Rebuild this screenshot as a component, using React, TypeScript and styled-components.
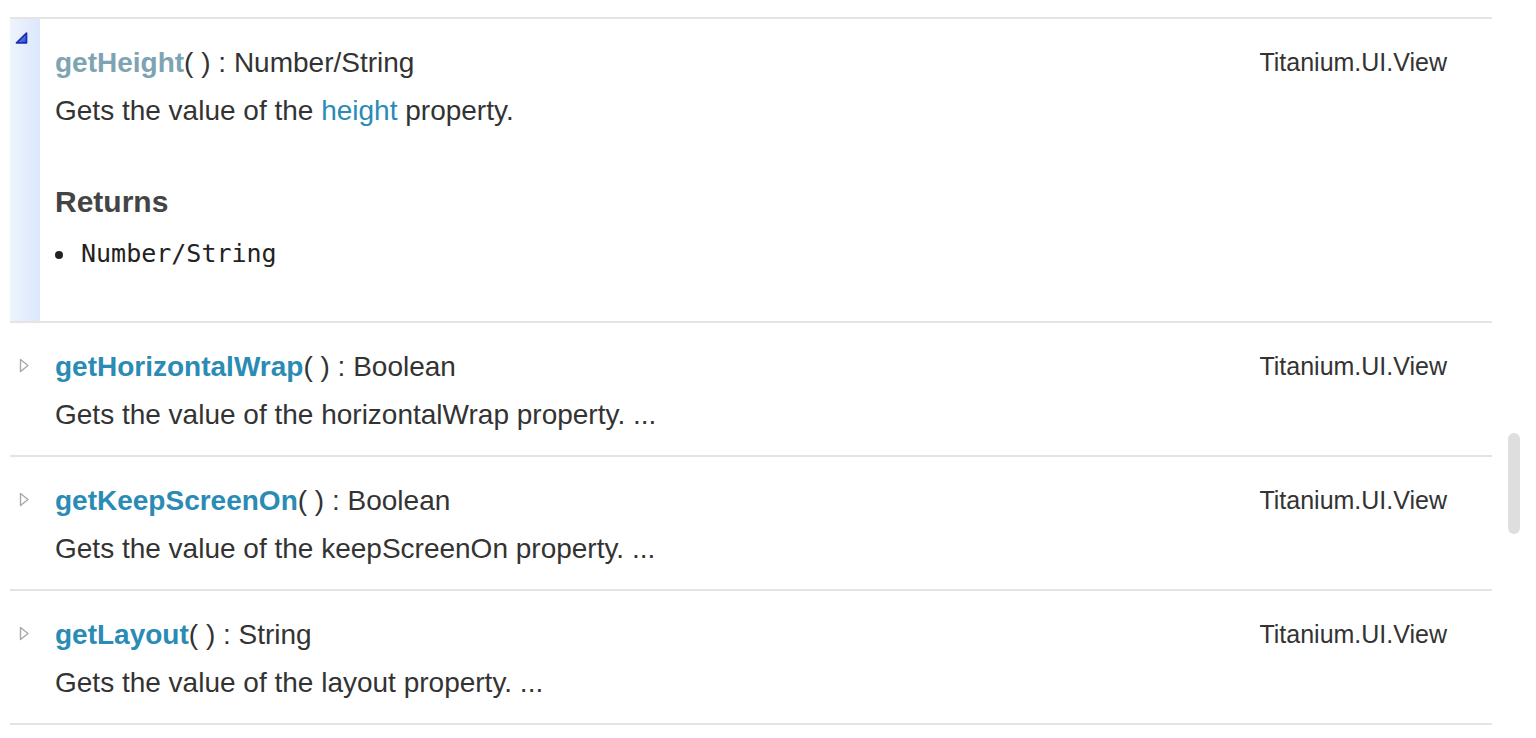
import React from "react";
import styled, { createGlobalStyle } from "styled-components";

const Global = createGlobalStyle`
  html, body { margin: 0; padding: 0; background: #fff; }
  body { font-family: "Liberation Sans", Arial, sans-serif; color: #333; overflow: hidden; }
`;

const Page = styled.div`
  padding: 17px 0 0 10px;
  width: 1482px;
`;

const List = styled.div`
  border-top: 2px solid #e4e4e4;
`;

const Row = styled.div`
  display: grid;
  grid-template-columns: 30px 1fr auto;
  border-bottom: 2px solid #e4e4e4;
`;

const Toggle = styled.div<{ $open?: boolean }>`
  display: flex;
  justify-content: flex-start;
  align-items: flex-start;
  padding-top: ${(p) => (p.$open ? "13px" : "35px")};
  padding-left: ${(p) => (p.$open ? "5px" : "9px")};
  background: ${(p) => (p.$open ? "linear-gradient(to right, #eef4fd, #dbe7fb)" : "transparent")};
`;

const Body = styled.div<{ $open?: boolean }>`
  padding: 20px 0 ${(p) => (p.$open ? "47px" : "16px")} 15px;
`;

const Line = styled.div`
  font-size: 28px;
  line-height: 48px;
  white-space: nowrap;
`;

const Name = styled.span<{ $visited?: boolean }>`
  font-weight: bold;
  color: ${(p) => (p.$visited ? "#7ea3b2" : "#2a8bb5")};
`;

const Link = styled.span`
  color: #2a8bb5;
`;

const Owner = styled.div`
  padding: 23px 45px 0 0;
  font-size: 25px;
  line-height: 40px;
  color: #333;
`;

const Heading = styled.div`
  margin-top: 47px;
  font-size: 30px;
  line-height: 40px;
  font-weight: bold;
  color: #444;
`;

const Item = styled.div`
  margin-top: 12px;
  display: flex;
  align-items: center;
  font-family: "DejaVu Sans Mono", monospace;
  font-size: 25px;
  line-height: 40px;
  color: #222;
  &::before {
    content: "";
    width: 8px;
    height: 8px;
    border-radius: 50%;
    background: #222;
    margin: 2px 18px 0 0;
  }
`;

const Thumb = styled.div`
  position: fixed;
  left: 1508px;
  top: 433px;
  width: 12px;
  height: 101px;
  border-radius: 6px;
  background: #dedede;
`;

const OpenIcon = () => (
  <svg width="13" height="12" viewBox="0 0 13 12">
    <defs>
      <linearGradient id="tri" x1="0" y1="0" x2="1" y2="1">
        <stop offset="0" stopColor="#8aa6f2" />
        <stop offset="1" stopColor="#2a48d8" />
      </linearGradient>
    </defs>
    <path d="M11.5 1.2 L11.5 10.8 L1.5 10.8 Z" fill="url(#tri)" stroke="#1a2fb0" strokeWidth="1.7" strokeLinejoin="round" />
  </svg>
);

const ClosedIcon = () => (
  <svg width="11" height="15" viewBox="0 0 11 15">
    <path d="M1.5 1.5 L9 7.5 L1.5 13.5 Z" fill="#fff" stroke="#a8a8a8" strokeWidth="1.4" strokeLinejoin="round" />
  </svg>
);

type Method = { name: string; ret: string; desc: string };

const methods: Method[] = [
  { name: "getHorizontalWrap", ret: "Boolean", desc: "Gets the value of the horizontalWrap property. ..." },
  { name: "getKeepScreenOn", ret: "Boolean", desc: "Gets the value of the keepScreenOn property. ..." },
  { name: "getLayout", ret: "String", desc: "Gets the value of the layout property. ..." },
];

export default function App() {
  return (
    <>
      <Global />
      <Page>
        <List>
          <Row>
            <Toggle $open>
              <OpenIcon />
            </Toggle>
            <Body $open>
              <Line>
                <Name $visited>getHeight</Name>( ) : Number/String
              </Line>
              <Line>
                Gets the value of the <Link>height</Link> property.
              </Line>
              <Heading>Returns</Heading>
              <Item>Number/String</Item>
            </Body>
            <Owner>Titanium.UI.View</Owner>
          </Row>
          {methods.map((m) => (
            <Row key={m.name}>
              <Toggle>
                <ClosedIcon />
              </Toggle>
              <Body>
                <Line>
                  <Name>{m.name}</Name>( ) : {m.ret}
                </Line>
                <Line>{m.desc}</Line>
              </Body>
              <Owner>Titanium.UI.View</Owner>
            </Row>
          ))}
        </List>
      </Page>
      <Thumb />
    </>
  );
}
